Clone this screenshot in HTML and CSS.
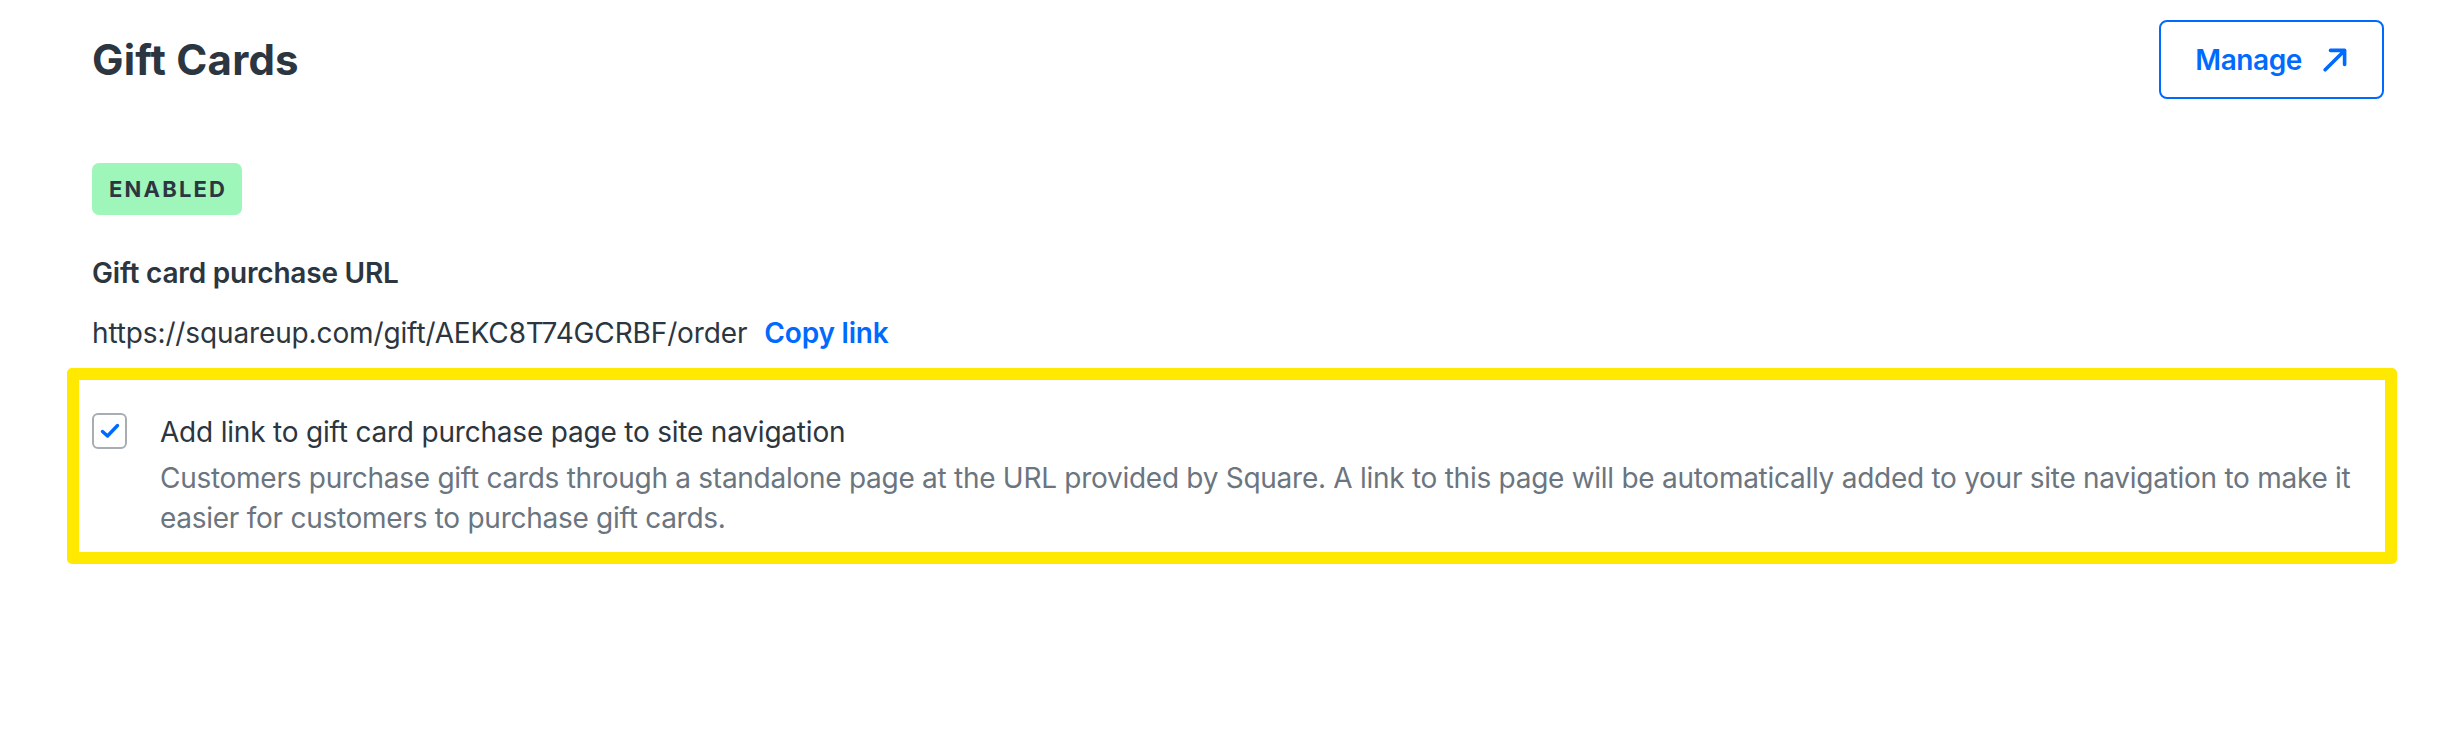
FILE: index.html
```html
<!DOCTYPE html>
<html lang="en">
<head>
<meta charset="utf-8">
<title>Gift Cards</title>
<link rel="stylesheet" href="styles.css">
</head>
<body>
<main class="page">
  <header class="header">
    <h1 class="title">Gift Cards</h1>
    <a class="manage-btn" href="#">
      <span>Manage</span>
      <svg class="manage-icon" viewBox="0 0 24 24" width="24" height="24" aria-hidden="true">
        <path d="M2.2 21.8 L21.6 2.4 M7.5 2.4 H21.6 V16.5" fill="none" stroke="currentColor" stroke-width="3.6" stroke-linecap="round" stroke-linejoin="round"/>
      </svg>
    </a>
  </header>

  <span class="badge">ENABLED</span>

  <h2 class="label">Gift card purchase URL</h2>
  <p class="url-row">
    <span class="url">https://squareup.com/gift/AEKC8T74GCRBF/order</span>
    <a class="copy-link" href="#">Copy link</a>
  </p>

  <section class="highlight">
    <div class="option">
      <span class="checkbox">
        <svg viewBox="0 0 20 16" width="20" height="16" aria-hidden="true">
          <path d="M2.5 8.5 L7.5 13 L17.5 2.5" fill="none" stroke="#006aff" stroke-width="3.4" stroke-linecap="round" stroke-linejoin="round"/>
        </svg>
      </span>
      <div class="option-text">
        <div class="option-title">Add link to gift card purchase page to site navigation</div>
        <div class="option-desc">Customers purchase gift cards through a standalone page at the URL provided by Square. A link to this page will be automatically added to your site navigation to make it easier for customers to purchase gift cards.</div>
      </div>
    </div>
  </section>
</main>
</body>
</html>
```
FILE: styles.css
```css
html, body {
  margin: 0;
  padding: 0;
  background: #ffffff;
}

body {
  font-family: Inter, "Noto Sans", "Liberation Sans", sans-serif;
  color: #2c3640;
  font-size: 28px;
  line-height: 40px;
  letter-spacing: -0.15px;
}

.page {
  padding: 20px 56px 0 92px;
}

.header {
  display: flex;
  justify-content: space-between;
  align-items: center;
}

.title {
  margin: 0;
  font-size: 42px;
  line-height: 52px;
  font-weight: 700;
  letter-spacing: 0.2px;
  color: #2c3640;
}

.manage-btn {
  display: flex;
  align-items: center;
  gap: 21px;
  box-sizing: border-box;
  height: 79px;
  padding: 0 35px 0 34px;
  border: 2px solid #006aff;
  border-radius: 8px;
  color: #006aff;
  font-size: 28px;
  font-weight: 600;
  letter-spacing: -0.4px;
  text-decoration: none;
}

.manage-icon {
  display: block;
}

.badge {
  display: block;
  width: fit-content;
  margin-top: 64px;
  padding: 0 15px 0 17px;
  height: 52px;
  line-height: 52px;
  border-radius: 7px;
  background: #9ff6bb;
  color: #2c3640;
  font-size: 22px;
  font-weight: 700;
  letter-spacing: 2.2px;
}

.label {
  margin: 38px 0 0;
  font-size: 28px;
  line-height: 40px;
  font-weight: 600;
  letter-spacing: -0.2px;
}

.url-row {
  margin: 20px 0 0;
  display: flex;
  align-items: baseline;
  gap: 17px;
}

.url {
  letter-spacing: -0.13px;
}

.copy-link {
  color: #006aff;
  font-weight: 600;
  letter-spacing: -0.2px;
  text-decoration: none;
}

.highlight {
  margin: 15px -13px 0 -25px;
  border: 12px solid #ffe900;
  border-radius: 5px;
  padding: 32px 0 14px 13px;
}

.option {
  display: flex;
  align-items: flex-start;
  gap: 33px;
}

.checkbox {
  flex: none;
  box-sizing: border-box;
  width: 35px;
  height: 36px;
  margin-top: 1px;
  border: 2px solid #a7adb3;
  border-radius: 6px;
  display: flex;
  align-items: center;
  justify-content: center;
}

.checkbox svg {
  display: block;
}

.option-title {
  color: #2c3640;
  letter-spacing: -0.2px;
}

.option-desc {
  margin-top: 6px;
  color: #6b7580;
  letter-spacing: -0.27px;
}
```
